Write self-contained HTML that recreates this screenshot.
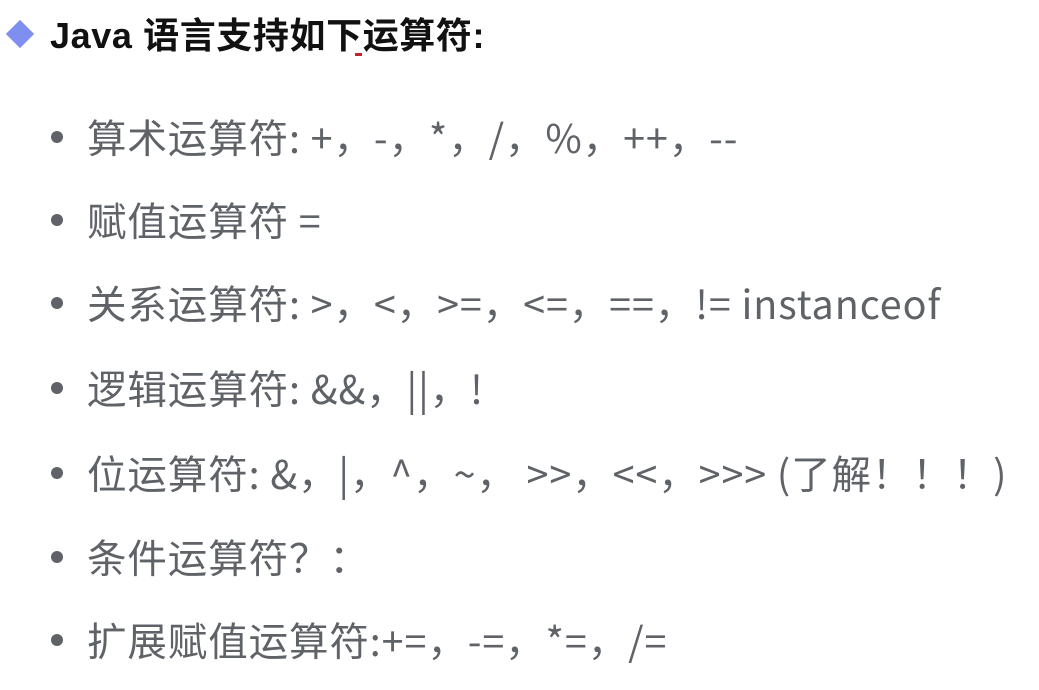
<!DOCTYPE html>
<html><head><meta charset="utf-8"><style>
html,body{margin:0;padding:0;background:#fff;width:1039px;height:690px;overflow:hidden}
body{font-family:"Liberation Sans","Noto Sans CJK SC",sans-serif;position:relative}
.h{position:absolute;left:50px;top:14px;font-size:36px;letter-spacing:0.6px;font-weight:bold;color:#111;line-height:44px;white-space:nowrap}
.d{position:absolute;left:10px;top:24px;width:20px;height:20px;background:#7f8ff0;transform:rotate(45deg)}
.i{position:absolute;left:87px;font-size:39.5px;letter-spacing:0.9px;color:#5f6368;line-height:50px;white-space:nowrap;font-family:"Noto Sans CJK SC",sans-serif}
.b{position:absolute;left:51px;width:12px;height:12px;border-radius:50%;background:#5f6368}
.m{position:absolute;left:355px;top:53px;width:7px;height:3px;background:#c0242a}
</style></head><body>
<div class="d"></div>
<div class="h">Java 语言支持如下运算符:</div>
<div class="m"></div>
<div class="b" style="top:131px"></div><div class="i" style="top:112px">算术运算符: +，-，*，/，%，++，--</div>
<div class="b" style="top:214px"></div><div class="i" style="top:195px">赋值运算符 =</div>
<div class="b" style="top:297px"></div><div class="i" style="top:278px">关系运算符: &gt;，&lt;，&gt;=，&lt;=，==，!= instanceof</div>
<div class="b" style="top:382px"></div><div class="i" style="top:363px">逻辑运算符: &amp;&amp;，||，!</div>
<div class="b" style="top:467px"></div><div class="i" style="top:448px">位运算符: &amp;，|，^，~， &gt;&gt;，&lt;&lt;，&gt;&gt;&gt; (了解！！！)</div>
<div class="b" style="top:551px"></div><div class="i" style="top:532px">条件运算符？：</div>
<div class="b" style="top:634px"></div><div class="i" style="top:615px">扩展赋值运算符:+=，-=，*=，/=</div>
</body></html>
